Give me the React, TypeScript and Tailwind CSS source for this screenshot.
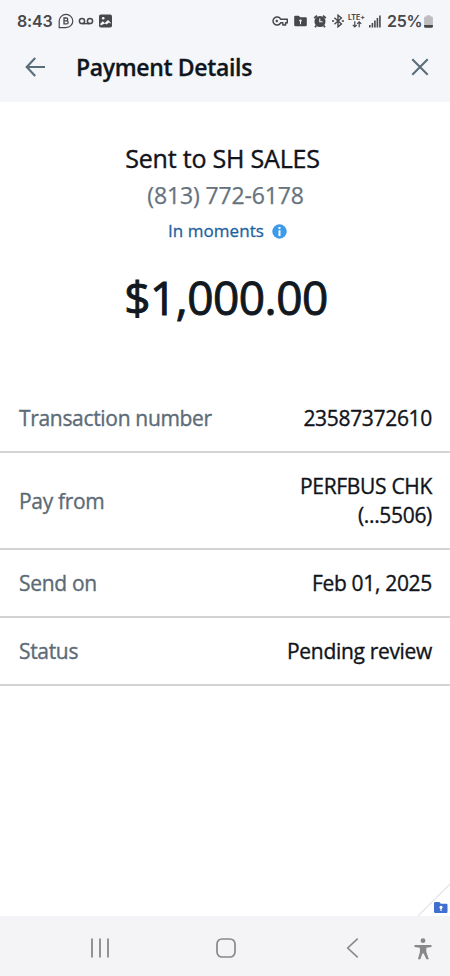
import type { ReactNode } from 'react'

const details = [
  { label: 'Transaction number', value: ['23587372610'] },
  { label: 'Pay from', value: ['PERFBUS CHK', '(...5506)'] },
  { label: 'Send on', value: ['Feb 01, 2025'] },
  { label: 'Status', value: ['Pending review'] },
]

function StatusBar() {
  return (
    <div className="flex h-[42px] items-center justify-between pl-[17px] pr-[16px] font-['Inter',sans-serif] text-[#48484b]">
      <div className="flex items-center">
        <span className="w-[36px] whitespace-nowrap text-[16px] font-semibold leading-none tracking-[-0.2px]">8:43</span>
        {/* B chat bubble */}
        <svg className="ml-[5px]" width="16" height="16" viewBox="0 0 16 16" fill="none" stroke="currentColor">
          <path d="M1.2 14.6V8A6.8 6.6 0 1 1 8 14.6Z" strokeWidth="1.2" />
          <path d="M6 5h2.3a1.4 1.4 0 0 1 0 2.9H6Zm0 2.9h2.7a1.5 1.5 0 0 1 0 3H6Z" strokeWidth="1.3" />
        </svg>
        <svg className="ml-[4px]" width="16" height="16" viewBox="0 0 16 16" fill="none" stroke="currentColor" strokeWidth="1.5">
          <circle cx="4" cy="8" r="2.6" />
          <circle cx="12" cy="8" r="2.6" />
          <path d="M4 10.6h8" />
        </svg>
        <svg className="ml-[5px]" width="13" height="14" viewBox="0 0 13 14">
          <rect y="0.5" width="13" height="13" rx="1.8" fill="currentColor" />
          <path d="M1.4 11.6V9.6L3.8 7.2 5.700 9 9 6l2.600 2.600v1.200l-1.600-1.200-2.400 2-1.500-1Z" fill="#f5f6fa" />
          <circle cx="4.2" cy="4.2" r="1.3" fill="#f5f6fa" />
        </svg>
      </div>
      <div className="flex items-center">
        <svg width="16" height="12" viewBox="0 0 16 12" fill="none" stroke="currentColor" strokeWidth="1.5">
          <path d="M8.6 4.2A4 4 0 1 0 8.6 7.8H10.8V10H13.6V7.8H15.3V4.2Z" strokeLinejoin="round" />
          <circle cx="4.8" cy="6" r="1" fill="currentColor" strokeWidth="0.7" />
        </svg>
        <svg className="ml-[6px]" width="13" height="12" viewBox="0 0 13 12">
          <path d="M1.2 0.8h3.6L6.2 2.3h5.6a1 1 0 0 1 1 1V10a1.2 1.2 0 0 1-1.2 1.2H1.4A1.2 1.2 0 0 1 .2 10V1.8a1 1 0 0 1 1-1Z" fill="currentColor" />
          <circle cx="6.5" cy="5.6" r="1.2" fill="#f5f6fa" />
          <path d="M6 6h1v3.2H6Z" fill="#f5f6fa" />
        </svg>
        <svg className="ml-[6px]" width="14" height="14" viewBox="0 0 14 14" fill="none">
          <circle cx="7" cy="7.5" r="5.5" fill="currentColor" />
          <path d="M1.2 4.2 4 1.6M12.8 4.2 10 1.6M3.4 11.5 2 13.2M10.6 11.5 12 13.2" stroke="currentColor" strokeWidth="1.8" />
          <path d="M6.8 4.6v3.1h2.8" stroke="#f5f6fa" strokeWidth="1.1" />
        </svg>
        <svg className="ml-[5px]" width="12" height="14" viewBox="0 0 12 14" fill="none" stroke="currentColor" strokeWidth="1.4">
          <path d="M2.4 3.8 9.4 10 6 12.8V1.2L9.4 4 2.4 10.2" />
          <path d="M0 7h2.2M9.8 7H12" />
        </svg>
        <div className="ml-[4px] flex w-[17px] flex-col items-center">
          <span className="whitespace-nowrap text-[7px] font-bold leading-[7px]">LTE+</span>
          <svg width="10" height="7" viewBox="0 0 10 7" fill="none" stroke="currentColor" strokeWidth="1.2">
            <path d="M2.8.2v5.6M.8 3.8l2 2 2-2M7.2 6.3V.8M5.2 2.8l2-2 2 2" />
          </svg>
        </div>
        <svg className="ml-[4px]" width="12" height="13" viewBox="0 0 12 13" fill="currentColor">
          <path d="M0 10h1.6v2.6H0ZM2.6 8h1.6v4.6H2.6ZM5.1 5.6h1.6v7H5.1ZM7.6 3.1h1.6v9.5H7.6ZM10.1.6h1.6v12h-1.6Z" />
        </svg>
        <span className="ml-[6px] w-[36px] whitespace-nowrap text-[16px] font-semibold leading-none tracking-[-0.3px]">25%</span>
        <svg className="mx-px" width="9" height="13" viewBox="0 0 9 13">
          <path d="M2.7.2h3.6v1.3H7.5A1.4 1.4 0 0 1 8.9 3v8.2a1.4 1.4 0 0 1-1.4 1.4h-6A1.4 1.4 0 0 1 .1 11.2V3a1.4 1.4 0 0 1 1.4-1.5h1.2Z" fill="#bdbdc0" />
          <path d="M.1 10h8.8v1.4a1.4 1.4 0 0 1-1.4 1.4h-6A1.4 1.4 0 0 1 .1 11.4Z" fill="currentColor" />
        </svg>
      </div>
    </div>
  )
}

function Header() {
  return (
    <header className="h-[102px] bg-[#f5f6fa]">
      <StatusBar />
      <div className="flex h-[50px] items-center pl-[25px] pr-[21px]">
        <svg width="21" height="20" viewBox="0 0 21 20" fill="none" stroke="#596d7b" strokeWidth="2.1">
          <path d="M10.2 1 1.7 10l8.5 9M1.7 10H20" />
        </svg>
        <h1 className="ml-[30px] text-[23px] font-semibold leading-none tracking-[-0.35px] text-[#10161e] [-webkit-text-stroke:0.3px]">Payment Details</h1>
        <svg className="ml-auto" width="18" height="18" viewBox="0 0 18 18" fill="none" stroke="#596d7b" strokeWidth="2.1">
          <path d="m1.3 1.3 15.4 15.4M16.7 1.3 1.3 16.7" />
        </svg>
      </div>
    </header>
  )
}

function Row({ label, children }: { label: string; children: ReactNode }) {
  return (
    <div className="flex items-center justify-between border-b-2 border-[#d3d3d5] pb-[18px] pl-[19px] pr-[18px] pt-[19px] text-[21px] leading-[29px] tracking-[-0.32px] [-webkit-text-stroke:0.35px]">
      <span className="text-[#5c6b76]">{label}</span>
      <span className="text-right text-[#11151b]">{children}</span>
    </div>
  )
}

function NavBar() {
  return (
    <nav className="flex h-[60px] items-center bg-[#f4f4f7] pl-[90px] pr-[18px] text-[#88888b]">
      <svg className="mt-[3px]" width="20" height="20" viewBox="0 0 20 20" stroke="currentColor" strokeWidth="1.8">
        <path d="M2 .5v19M10 .5v19M18 .5v19" />
      </svg>
      <svg className="ml-[106px] mt-[3px]" width="20" height="20" viewBox="0 0 20 20" fill="none" stroke="currentColor" strokeWidth="1.7">
        <rect x="1" y="1" width="18" height="18" rx="5" />
      </svg>
      <svg className="ml-[110px] mt-[3px]" width="13" height="20" viewBox="0 0 13 20" fill="none" stroke="currentColor" strokeWidth="1.6">
        <path d="m11.7.7-10 9.3 10 9.3" />
      </svg>
      <svg className="ml-auto mt-[5px]" width="18" height="22" viewBox="0 0 18 22" fill="currentColor">
        <circle cx="9" cy="2.7" r="2.4" />
        <path d="M.5 6.9h17v2.2l-5.2.6v4.2l2.6 7.3h-2.5L9.6 15.4H8.4l-2 5.8H3.9l2-7.3V9.7L.5 9.1Z" />
      </svg>
    </nav>
  )
}

export default function App() {
  return (
    <div className="relative flex h-[976px] w-[450px] flex-col overflow-hidden bg-white font-['Open_Sans','Noto_Sans',sans-serif]">
      <Header />
      <section className="flex h-[283px] flex-col items-center pt-[38px]">
        <p className="mr-[5px] text-[25px] leading-[36px] tracking-[-0.2px] text-[#11151b] [-webkit-text-stroke:0.4px]">Sent to SH SALES</p>
        <p className="mt-px pl-px text-[23px] leading-[37px] tracking-[-0.15px] text-[#66737e] [-webkit-text-stroke:0.25px]">(813) 772-6178</p>
        <div className="flex items-center gap-[8px] pl-[5px] text-[17px] leading-[34px] tracking-[0.05px] text-[#1b62a0] [-webkit-text-stroke:0.3px]">
          In moments
          <svg width="15" height="15" viewBox="0 0 15 15">
            <circle cx="7.5" cy="7.5" r="7.2" fill="#3d9be9" />
            <path d="M6.5 2.9h2v2h-2ZM6.5 6.2h2V12h-2Z" fill="#fff" />
          </svg>
        </div>
        <p className="mt-[18px] pl-[2px] text-[46px] leading-[62px] tracking-[-0.5px] text-[#11181f] [-webkit-text-stroke:1px]">$1,000.00</p>
      </section>
      <section className="flex-1">
        {details.map((item) => (
          <Row key={item.label} label={item.label}>
            {item.value.map((line) => (
              <span key={line} className="block">{line}</span>
            ))}
          </Row>
        ))}
      </section>
      <NavBar />
      {/* corner fold badge */}
      <svg className="absolute bottom-[60px] right-0" width="33" height="33" viewBox="0 0 33 33">
        <path d="M1 33 33 1" stroke="#e6e6e9" strokeWidth="1.3" />
        <path d="M18.200 19h4.100l1.600 1.700h5.400a1.200 1.200 0 0 1 1.200 1.200v6.900a1.200 1.200 0 0 1-1.200 1.200H18.200a1.200 1.200 0 0 1-1.200-1.200v-8.600a1.200 1.200 0 0 1 1.200-1.200Z" fill="#416fd0" />
        <circle cx="24" cy="24.3" r="1.5" fill="#fff" />
        <path d="M23.4 24.5h1.2v3.4h-1.2Z" fill="#fff" />
      </svg>
    </div>
  )
}
